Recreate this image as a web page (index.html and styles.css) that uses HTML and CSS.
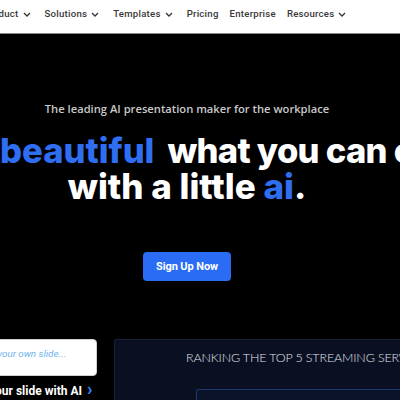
FILE: index.html
```html
<!DOCTYPE html>
<html>
<head>
<meta charset="utf-8">
<link rel="stylesheet" href="styles.css">
</head>
<body>
<header class="nav">
  <ul class="menu">
    <li class="item">Product <svg class="chev" width="8" height="5" viewBox="0 0 8 5"><path d="M1 1l3 3 3-3"/></svg></li>
    <li class="item">Solutions <svg class="chev" width="8" height="5" viewBox="0 0 8 5"><path d="M1 1l3 3 3-3"/></svg></li>
    <li class="item">Templates <svg class="chev" width="8" height="5" viewBox="0 0 8 5"><path d="M1 1l3 3 3-3"/></svg></li>
    <li class="item">Pricing</li>
    <li class="item">Enterprise</li>
    <li class="item">Resources <svg class="chev" width="8" height="5" viewBox="0 0 8 5"><path d="M1 1l3 3 3-3"/></svg></li>
  </ul>
</header>
<main class="hero">
  <p class="kicker">The leading AI presentation maker for the workplace</p>
  <h1 class="headline">
    <span class="line line-one"><span class="blue">beautiful</span><span class="gap">what you can create</span></span>
    <span class="line line-two">with a little <span class="blue">ai</span>.</span>
  </h1>
  <div class="cta-row"><a class="cta">Sign Up Now</a></div>
  <section class="demo">
    <div class="prompt-col">
      <div class="prompt-box"><span class="placeholder">Type your own slide...</span></div>
      <div class="prompt-link">Create your slide with AI <span class="arrow">&#x203A;</span></div>
    </div>
    <div class="slide">
      <div class="slide-title">RANKING THE TOP 5 STREAMING SERVICES</div>
      <div class="bar-row">
        <span class="bar-label">Netflix</span>
        <span class="bar"></span>
      </div>
    </div>
  </section>
</main>
</body>
</html>
```
FILE: styles.css
```css
html, body {
  margin: 0;
  padding: 0;
  width: 400px;
  height: 400px;
  overflow: hidden;
  background: #000;
}
body {
  font-family: "Roboto", "Liberation Sans", sans-serif;
}
.nav {
  height: 33px;
  background: #fff;
  border-bottom: 1px solid #8a8a8a;
  overflow: hidden;
}
.menu {
  list-style: none;
  margin: 0 0 0 -17px;
  padding: 0;
  display: flex;
  height: 27px;
  align-items: center;
  gap: 11px;
  white-space: nowrap;
}
.item {
  font-size: 9.6px;
  font-weight: 500;
  color: #383838;
  letter-spacing: 0.25px;
  display: flex;
  align-items: center;
  gap: 4px;
}
.chev {
  fill: none;
  stroke: #333;
  stroke-width: 1.3;
  margin: 2px 3px 0 0;
}
.hero {
  background: #000;
  height: 366px;
  width: 374px;
}
.kicker {
  margin: 0;
  padding-top: 67px;
  line-height: 16px;
  text-align: center;
  font-family: "Open Sans", sans-serif;
  font-size: 11.2px;
  font-weight: 600;
  color: #c9c9c9;
  white-space: nowrap;
}
.headline {
  margin: 15px 0 0;
  font-family: "Inter", sans-serif;
  font-size: 34.6px;
  font-weight: 800;
  line-height: 36px;
  color: #fff;
  white-space: nowrap;
}
.line { display: block; }
.line-one { padding-left: 0; }
.line-two { text-align: center; font-size: 35px; }
.gap { margin-left: 13px; letter-spacing: -0.7px; }
.blue { color: #2f6ef0; }
.cta-row {
  display: flex;
  justify-content: center;
  margin-top: 48px;
}
.cta {
  background: #2a6df4;
  color: #fff;
  font-size: 11px;
  font-weight: 700;
  border-radius: 4px;
  padding: 7px 13px;
  line-height: 15px;
  letter-spacing: -0.1px;
}
.demo {
  display: flex;
  margin-top: 58px;
  gap: 17px;
  margin-left: -40px;
  width: 480px;
}
.prompt-col {
  width: 137px;
  flex: none;
}
.prompt-box {
  height: 37px;
  background: #fff;
  border: 1px solid #cfcfcf;
  border-radius: 4px;
  padding: 4px 14px;
  box-sizing: border-box;
  line-height: 16px;
}
.placeholder {
  font-size: 9.8px;
  font-style: italic;
  color: #6eb2ee;
  white-space: nowrap;
}
.prompt-link {
  margin-top: 7px;
  margin-left: -14px;
  font-size: 12px;
  font-weight: 700;
  line-height: 15px;
  color: #fff;
  white-space: nowrap;
  text-align: center;
}
.arrow {
  color: #2f86ff;
  font-size: 18px;
  font-weight: 700;
  margin-left: 2px;
  line-height: 12px;
}
.slide {
  flex: 1;
  background: #0a1021;
  border: 1px solid #172036;
  border-radius: 2px;
  height: 80px;
  padding-left: 71px;
}
.slide-title {
  margin-top: 10px;
  font-family: "Lato", sans-serif;
  font-weight: 300;
  font-size: 12.5px;
  letter-spacing: -0.15px;
  line-height: 16px;
  color: #e0e4ee;
  white-space: nowrap;
}
.bar-row {
  display: flex;
  align-items: flex-start;
  margin-top: 23px;
  margin-left: -14px;
}
.bar-label {
  font-size: 6.5px;
  color: #b8bec8;
  margin-top: 12px;
  width: 24px;
}
.bar {
  flex: 1;
  height: 20px;
  border: 1px solid #1c3a70;
  border-radius: 2px;
  background: #0a1328;
}
```
